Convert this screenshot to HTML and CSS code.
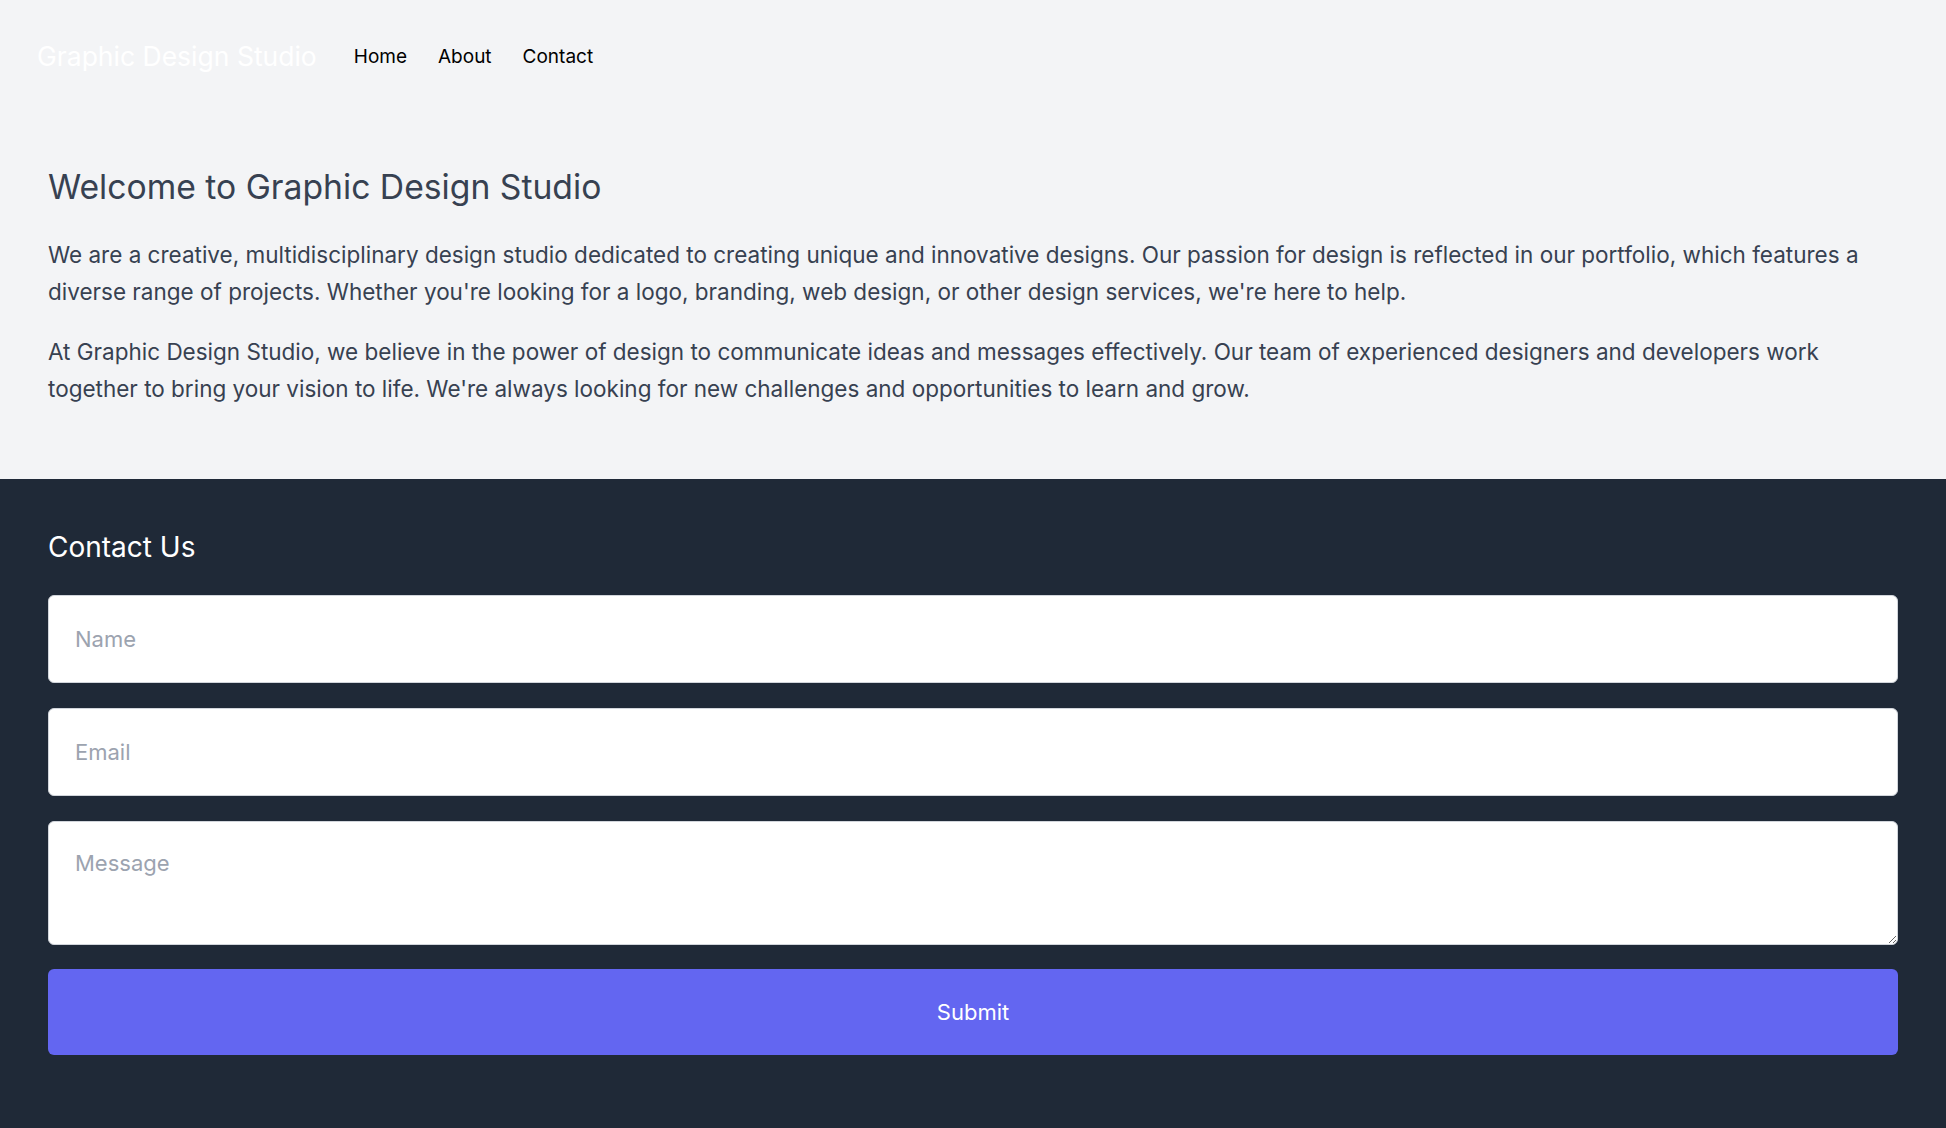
FILE: index.html
```html
<!DOCTYPE html>
<html lang="en">
<head>
<meta charset="utf-8">
<title>Graphic Design Studio</title>
<link rel="stylesheet" href="styles.css">
</head>
<body>
<header class="site-header">
  <a class="logo" href="#">Graphic Design Studio</a>
  <nav class="nav">
    <a href="#">Home</a>
    <a href="#">About</a>
    <a href="#">Contact</a>
  </nav>
</header>
<main class="intro">
  <h1 class="intro-title">Welcome to Graphic Design Studio</h1>
  <p class="intro-text">We are a creative, multidisciplinary design studio dedicated to creating unique and innovative designs. Our passion for design is reflected in our portfolio, which features a diverse range of projects. Whether you're looking for a logo, branding, web design, or other design services, we're here to help.</p>
  <p class="intro-text">At Graphic Design Studio, we believe in the power of design to communicate ideas and messages effectively. Our team of experienced designers and developers work together to bring your vision to life. We're always looking for new challenges and opportunities to learn and grow.</p>
</main>
<footer class="contact">
  <h2 class="contact-title">Contact Us</h2>
  <form class="contact-form">
    <input class="field" type="text" placeholder="Name">
    <input class="field" type="email" placeholder="Email">
    <textarea class="field field-area" placeholder="Message"></textarea>
    <button class="submit" type="button">Submit</button>
  </form>
</footer>
</body>
</html>
```
FILE: styles.css
```css
* { box-sizing: border-box; }
html, body { margin: 0; padding: 0; }
body {
  background: #f3f4f6;
  font-family: Inter, "Liberation Sans", sans-serif;
  color: #374151;
  min-height: 100vh;
  display: flex;
  flex-direction: column;
}
.site-header {
  display: flex;
  align-items: center;
  gap: 37px;
  padding: 0 37px;
  height: 112px;
}
.logo {
  color: #ffffff;
  font-size: 26.5px;
  text-decoration: none;
}
.nav {
  display: flex;
  gap: 31px;
}
.nav a {
  color: #000000;
  text-decoration: none;
  font-size: 19px;
}
.intro {
  padding: 53px 48px 72px;
}
.intro-title {
  margin: 0 0 27px;
  font-size: 33.7px;
  font-weight: 400;
  line-height: 1.3;
  color: #374151;
}
.intro-text {
  margin: 0 0 23px;
  font-size: 22.5px;
  line-height: 37px;
}
.intro-text:last-child { margin-bottom: 0; }
.contact {
  flex: 1;
  background: #1f2937;
  padding: 50px 48px 73px;
}
.contact-title {
  margin: 0 0 30px;
  font-size: 28px;
  font-weight: 400;
  line-height: 36px;
  color: #ffffff;
}
.contact-form {
  display: flex;
  flex-direction: column;
  gap: 25px;
}
.field {
  display: block;
  width: 100%;
  height: 88px;
  border: 1px solid #d1d5db;
  border-radius: 6px;
  background: #ffffff;
  padding: 0 26px;
  font-family: inherit;
  font-size: 22px;
  color: #374151;
}
.field::placeholder { color: #9ca3af; }
.field-area {
  height: 124px;
  padding: 28px 26px;
  resize: vertical;
}
.submit {
  height: 86px;
  margin-top: -1px;
  border: none;
  border-radius: 6px;
  background: #6366f1;
  color: #ffffff;
  font-family: inherit;
  font-size: 22px;
  cursor: pointer;
}
```
